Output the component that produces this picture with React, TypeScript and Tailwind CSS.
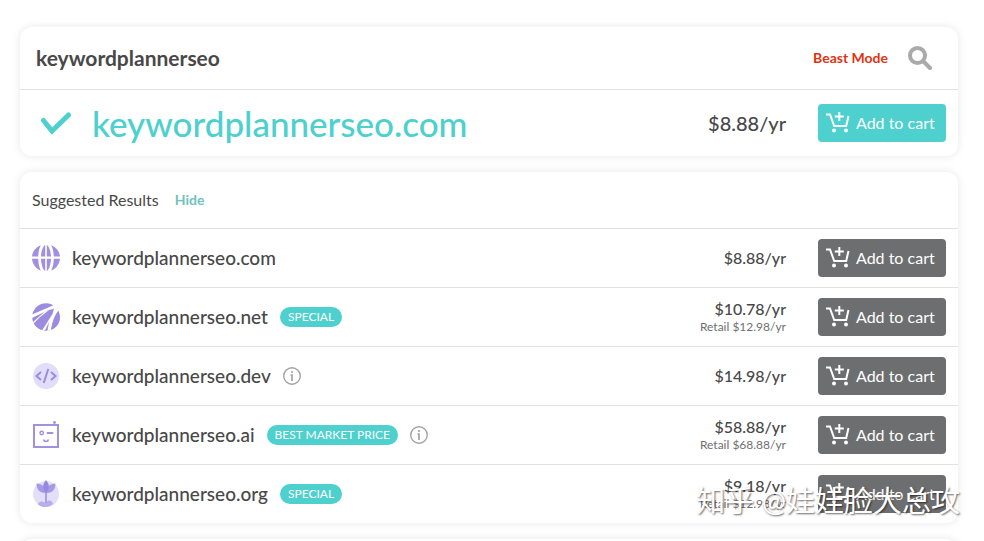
import React from 'react';

interface Domain {
  name: string;
  price: string;
  retail?: string;
  badge?: string;
  info?: boolean;
  icon: React.ReactNode;
}

const GlobeIcon = () => (
  <svg viewBox="0 0 28 28" className="w-7 h-7" fill="#9f90e0">
    <path d="M13.2 1C11.2 2 9.300 6.400 9 12.400h4.200zM14.800 1C16.800 2 18.700 6.400 19 12.400h-4.200z" />
    <path d="M13.200 27C11.200 26 9.300 21.400 9 14.800h4.200zM14.800 27C16.800 26 18.700 21.400 19 14.800h-4.200z" />
    <path d="M8.800 1.300C3.900 3.300.5 7.400 0 12.400h6.200c.2-4.800 1.100-8.400 2.600-11.100zM19.200 1.300C24.100 3.300 27.500 7.400 28 12.400h-6.200c-.2-4.800-1.100-8.400-2.600-11.100z" />
    <path d="M8.800 26.700C3.900 24.700.5 20.200 0 14.800h6.200c.2 5 1.100 9.100 2.600 11.900zM19.200 26.700C24.100 24.700 27.500 20.200 28 14.800h-6.200c-.2 5-1.100 9.100-2.600 11.900z" />
  </svg>
);

const NetIcon = () => (
  <svg viewBox="0 0 28 28" className="w-7 h-7">
    <circle cx="14" cy="14" r="13.800" fill="#9b8ce0" />
    <g fill="#fff">
      <path d="M0 11.500 22 2l4 2.500-10.500 3L0 15z" />
      <path d="M1 19 13 8.500l4-1.500L7.500 14.500 1.500 20.500z" />
      <path d="M22.500 3.500 27 7c-3.500 4-6 9-8 20l-3.500 1c.5-4 1-7 2-10L13.500 26.500 11.500 28 10 27.500 20.500 11z" />
    </g>
    <path d="M26 8.500c1.300 1.800 1.800 4 1.800 6.200 0 5.500-3.300 9.800-8.600 12C20.300 19 22.500 13.500 26 8.500z" fill="#9b8ce0" />
  </svg>
);

const DevIcon = () => (
  <svg viewBox="0 0 28 28" className="w-7 h-7" fill="none" stroke="#9b8ce0" strokeWidth="2">
    <circle cx="14" cy="14" r="13" fill="#e2ddf8" stroke="none" />
    <path d="M9 10 4.500 14 9 18M19 10 23.500 14 19 18M16.300 7 11.700 21" />
  </svg>
);

const RobotIcon = () => (
  <svg viewBox="0 0 28 28" className="w-7 h-7" fill="none" stroke="#a092df" strokeWidth="2">
    <rect x="2" y="4" width="24" height="22" />
    <path d="M22.500 4V1.500" strokeWidth="1.500" />
    <circle cx="22.500" cy="1.300" r="1.300" fill="#a092df" stroke="none" />
    <circle cx="9.700" cy="12" r="1.700" strokeWidth="1.400" />
    <path d="M15.500 12h5" strokeLinecap="round" />
    <path d="M11.500 18.500c.5 2.600 4.500 2.600 5 0" strokeWidth="1.500" />
  </svg>
);

const PlantIcon = () => (
  <svg viewBox="0 0 28 28" className="w-7 h-7">
    <circle cx="14" cy="14" r="13" fill="#e4dff8" />
    <path d="M6 24.500c.5-2.500 2.500-3.500 4.500-3l2.700 1.500 3.300-2.500c2.500-.5 4 1.500 4.500 3.500-4 4-11 4-15 .500z" fill="#b9adec" />
    <path d="M13.300 12h1.400v11h-1.400z" fill="#9485de" />
    <path d="M4.500 3.500c5.500 0 9.300 3.500 9.500 9.500-6 .5-9.500-3.500-9.500-9.500z" fill="#a799e5" />
    <path d="M23.500 3.500c-5.500 0-9.300 3.500-9.500 9.500 6 .5 9.500-3.500 9.500-9.500z" fill="#a799e5" />
    <path d="M14 0c-3.800 4.500-3.800 8.500 0 13 3.800-4.500 3.800-8.500 0-13z" fill="#9788df" />
  </svg>
);

const CartIcon = () => (
  <svg viewBox="0 0 24 22" className="w-6 h-[22px] shrink-0" fill="none" stroke="#fff" strokeWidth="2">
    <path d="M0 2.500h4l4.200 11.500h12L22.500 4" />
    <path d="M13.300 0v9M8.800 4.500h9" />
    <circle cx="8" cy="18.500" r="2" fill="#fff" stroke="none" />
    <circle cx="20" cy="18.500" r="2" fill="#fff" stroke="none" />
  </svg>
);

const InfoIcon = () => (
  <svg viewBox="0 0 18 18" className="w-[18px] h-[18px]" fill="none" stroke="#a3a3a3">
    <circle cx="9" cy="9" r="8.300" strokeWidth="1.400" />
    <path d="M7.500 8H9v6" strokeWidth="1.700" />
    <circle cx="9" cy="5" r="1.100" fill="#a3a3a3" stroke="none" />
  </svg>
);

const domains: Domain[] = [
  { name: 'keywordplannerseo.com', price: '$8.88/yr', icon: <GlobeIcon /> },
  { name: 'keywordplannerseo.net', price: '$10.78/yr', retail: 'Retail $12.98/yr', badge: 'SPECIAL', icon: <NetIcon /> },
  { name: 'keywordplannerseo.dev', price: '$14.98/yr', info: true, icon: <DevIcon /> },
  { name: 'keywordplannerseo.ai', price: '$58.88/yr', retail: 'Retail $68.88/yr', badge: 'BEST MARKET PRICE', info: true, icon: <RobotIcon /> },
  { name: 'keywordplannerseo.org', price: '$9.18/yr', retail: 'Retail $12.98/yr', badge: 'SPECIAL', icon: <PlantIcon /> },
];

const AddToCart = ({ primary = false }: { primary?: boolean }) => (
  <button
    type="button"
    className={`flex h-[38px] w-32 shrink-0 items-center gap-1.5 rounded pl-2 text-base whitespace-nowrap text-white ${primary ? 'bg-[#4dd0ce]' : 'bg-[#6d6e70]'}`}
  >
    <CartIcon />
    Add to cart
  </button>
);

const DomainRow = ({ domain }: { domain: Domain }) => (
  <li className="flex h-[59px] items-center border-t border-[#e1e1e1] px-3">
    {domain.icon}
    <span className="ml-3 text-[19px] leading-6 font-medium">{domain.name}</span>
    {domain.badge && (
      <span className="ml-3 h-5 rounded-full bg-[#4dd0ce] px-2 text-xs leading-5 text-white">{domain.badge}</span>
    )}
    {domain.info && (
      <button type="button" aria-label="More information" className="ml-3">
        <InfoIcon />
      </button>
    )}
    <div className="ml-auto mr-8 text-right">
      <p className="text-base leading-5 font-medium">{domain.price}</p>
      {domain.retail && <p className="text-xs leading-4 text-[#707070]">{domain.retail}</p>}
    </div>
    <AddToCart />
  </li>
);

const App = () => {
  return (
    <main className="relative flex h-screen flex-col gap-4 overflow-hidden bg-white pt-[27px] pl-5 pr-[26px] font-['Lato','Noto_Sans_CJK_SC',sans-serif] text-[#484848]">
      <section className="shrink-0 rounded-xl bg-white shadow-[0_0_8px_rgba(0,0,0,0.1)]">
        <form className="flex h-[62px] items-center pl-4 pr-[26px]">
          <input
            type="text"
            aria-label="Domain search"
            defaultValue="keywordplannerseo"
            className="min-w-0 flex-1 bg-transparent text-[21px] leading-7 font-bold outline-none"
          />
          <a href="#beast" className="mr-5 text-sm font-bold text-[#df3312]">Beast Mode</a>
          <button type="button" aria-label="Search">
            <svg viewBox="0 0 24 24" className="w-6 h-6" fill="none" stroke="#aaaaaa">
              <circle cx="9.500" cy="9.500" r="7.500" strokeWidth="4" />
              <path d="m15.500 15.500 6.500 6.500" strokeWidth="4" strokeLinecap="round" />
            </svg>
          </button>
        </form>
        <div className="flex h-[67px] items-center border-t border-[#e1e1e1] pl-5 pr-3">
          <svg viewBox="0 0 32 24" className="h-6 w-8" fill="none" stroke="#4dd0ce" strokeWidth="5" strokeLinecap="round">
            <path d="m3.500 9.500 8.500 10.500L28.500 4" />
          </svg>
          <h1 className="ml-5 text-[35px] leading-10 font-medium text-[#4dd0ce]">keywordplannerseo.com</h1>
          <p className="ml-auto mr-8 text-xl font-medium">$8.88/yr</p>
          <AddToCart primary />
        </div>
      </section>

      <section className="shrink-0 rounded-xl bg-white shadow-[0_0_8px_rgba(0,0,0,0.1)]">
        <div className="flex h-14 items-center gap-4 px-3">
          <h2 className="text-base">Suggested Results</h2>
          <a href="#hide" className="text-sm font-bold text-[#6fc3bf]">Hide</a>
        </div>
        <ul>
          {domains.map((domain) => (
            <DomainRow key={domain.name} domain={domain} />
          ))}
        </ul>
      </section>

      <section className="h-14 shrink-0 rounded-xl bg-white shadow-[0_0_8px_rgba(0,0,0,0.1)]" />

      <p className="pointer-events-none absolute right-6 bottom-5 whitespace-nowrap text-[29px] leading-10 text-white [text-shadow:1px_1px_2px_rgba(0,0,0,0.6)]">
        知乎 @娃娃脸大总攻
      </p>
    </main>
  );
};

export default App;
